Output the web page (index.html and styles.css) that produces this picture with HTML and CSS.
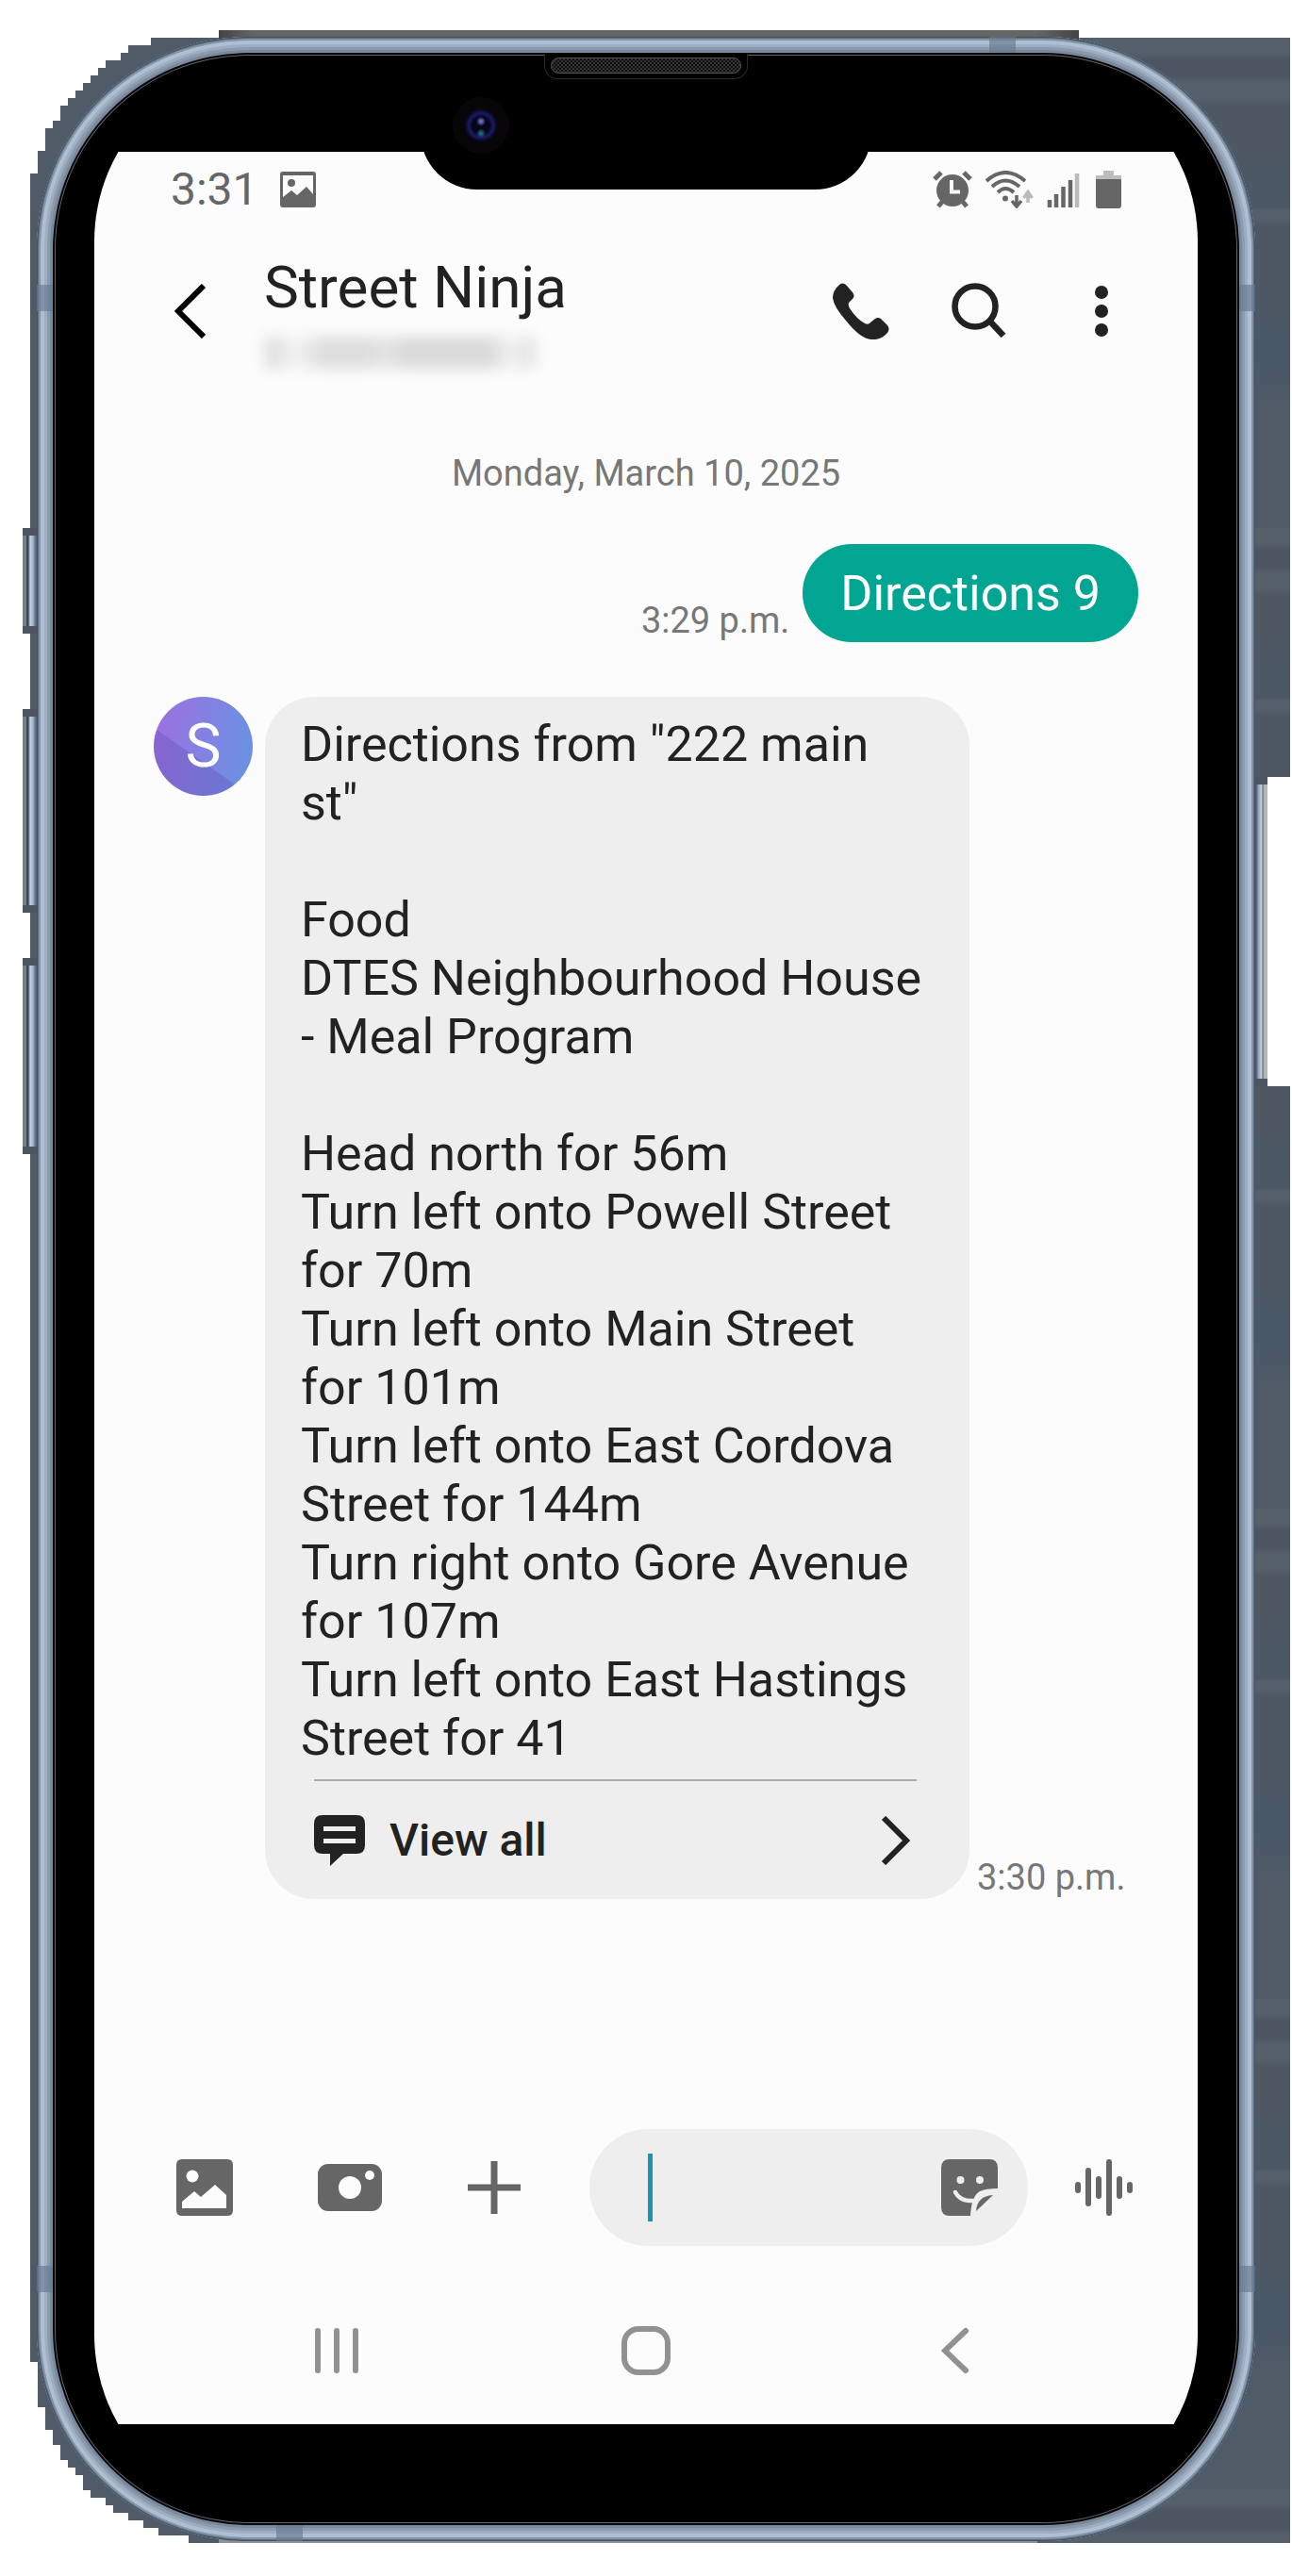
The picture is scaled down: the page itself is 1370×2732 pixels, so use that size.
FILE: index.html
```html
<!DOCTYPE html>
<html lang="en">
<head>
<meta charset="utf-8">
<meta name="viewport" content="width=device-width, initial-scale=1">
<title>Street Ninja</title>
<link rel="stylesheet" href="styles.css">
</head>
<body>
<div class="device">
  <div class="edge edge-top"></div>
  <div class="edge edge-left"></div>
  <div class="edge edge-bottom"></div>
  <div class="edge edge-right"></div>
  <svg class="steps steps-top" viewBox="0 0 200 192" aria-hidden="true"><path fill="#515b68" d="M200 0V8H152V8H128V16H104V24H96V32H80V40H72V48H64V56H56V64H48V72H40V80H32V96H24V104H16V128H8V152H0V192H100L200 100Z"/></svg>
  <svg class="steps steps-bottom" viewBox="0 0 200 192" aria-hidden="true"><path fill="#515b68" d="M0 0H8V48H16V72H24V88H32V104H40V112H48V120H56V136H64V144H80V152H88V160H104V168H120V176H136V184H168V192H200V100L100 0Z"/></svg>
  <div class="key key-mute"></div>
  <div class="key key-up"></div>
  <div class="key key-down"></div>
  <div class="key-gap"></div>
  <div class="key key-power"></div>

  <div class="phone">
    <span class="band band-left band-high"></span>
    <span class="band band-right band-high"></span>
    <span class="band band-left band-low"></span>
    <span class="band band-right band-low"></span>
    <span class="band band-top"></span>
    <span class="band band-bottom"></span>
    <div class="speaker"><div class="grille"></div></div>

    <div class="screen">
      <div class="display">
        <div class="status">
          <span class="clock">3:31</span>
          <svg width="38" height="38" viewBox="0 0 38 38" aria-hidden="true"><path fill="#666" fill-rule="evenodd" d="M3 0H35Q38 0 38 3V35Q38 38 35 38H3Q0 38 0 35V3Q0 0 3 0ZM3 4V27L12 20L18 25L28 16L35 24V4Z"/><circle cx="12" cy="12" r="4" fill="#666"/></svg>
          <span class="spacer"></span>
          <svg width="42" height="40" viewBox="0 0 42 40" aria-hidden="true"><ellipse cx="21" cy="21" rx="17" ry="17" fill="#666"/><path d="M2 9L9 2M40 9L33 2" stroke="#666" stroke-width="5"/><path d="M10 33L6 38M32 33L36 38" stroke="#666" stroke-width="5"/><path d="M20 10V22.500H29" fill="none" stroke="#fcfcfc" stroke-width="4"/></svg>
          <svg class="wifi" width="54" height="40" viewBox="0 0 54 40" aria-hidden="true"><g fill="none" stroke="#666" stroke-width="4"><path d="M2 11Q22 -7 43 11"/><path d="M8 17Q22 4 37 17"/><path d="M14 23Q22 15 31 23"/><path d="M34 26V37M29 32L34 38L39 32" stroke-width="3.500"/></g><circle cx="22" cy="29.500" r="3" fill="#666"/><path d="M46 34V23M41.500 29L46 22.500L50.500 29" fill="none" stroke="#bbb" stroke-width="3.500"/></svg>
          <svg class="signal" width="36" height="40" viewBox="0 0 36 40" aria-hidden="true"><g stroke="#666" stroke-width="4.500"><path d="M3 31V39M10 25V39M17.500 17V39M25 10V39"/></g><path d="M32 3V39" stroke="#bbb" stroke-width="4.500"/></svg>
          <svg width="27" height="40" viewBox="0 0 27 40" aria-hidden="true"><path d="M8 0H19V5H27V10H0V5H8Z" fill="#bdbdbd"/><path d="M0 9H27V37Q27 40 24 40H3Q0 40 0 37Z" fill="#666"/></svg>
        </div>

        <header class="bar">
          <button class="icon-btn" type="button" aria-label="Back"><svg width="34" height="58" viewBox="0 0 34 58"><path d="M32 2L5 29L32 56" fill="none" stroke="#000" stroke-width="6"/></svg></button>
          <div class="contact">
            <h1>Street Ninja</h1>
            <div class="hidden-number" role="img" aria-label="Phone number hidden"></div>
          </div>
          <button class="icon-btn" type="button" aria-label="Call"><svg width="60" height="60" viewBox="0 0 60 60"><path fill="#222" d="M7 2Q10 -1 14 2L21 10Q24 14 21 17L17 21Q16 23 18 27Q25 38 34 43Q38 45 40 42L45 38Q48 36 51 38L58 45Q61 49 58 53Q51 61 41 60Q29 59 14 40Q1 25 0 16Q0 8 7 2Z"/></svg></button>
          <button class="icon-btn search" type="button" aria-label="Search"><svg width="58" height="60" viewBox="0 0 58 60"><circle cx="25" cy="25" r="21.500" fill="none" stroke="#222" stroke-width="6.500"/><path d="M40 40L55 56" stroke="#222" stroke-width="6.500"/></svg></button>
          <button class="icon-btn more" type="button" aria-label="More options"><svg width="14" height="54" viewBox="0 0 14 54" fill="#222"><circle cx="7" cy="7" r="7"/><circle cx="7" cy="27" r="7"/><circle cx="7" cy="47" r="7"/></svg></button>
        </header>

        <main class="thread">
          <p class="date">Monday, March 10, 2025</p>
          <div class="row sent">
            <time>3:29 p.m.</time>
            <p class="bubble out">Directions 9</p>
          </div>
          <div class="row received">
            <div class="avatar">S</div>
            <div class="bubble in">
              <p>Directions from "222 main st"<br><br>Food<br>DTES Neighbourhood House - Meal Program<br><br>Head north for 56m<br>Turn left onto Powell Street for 70m<br>Turn left onto Main Street for 101m<br>Turn left onto East Cordova Street for 144m<br>Turn right onto Gore Avenue for 107m<br>Turn left onto East Hastings Street for 41</p>
              <button class="view-all" type="button">
                <svg width="54" height="54" viewBox="0 0 54 54" aria-hidden="true"><path fill="#222" fill-rule="evenodd" d="M9 0H45Q54 0 54 9V32Q54 41 45 41H31L17 54V41H9Q0 41 0 32V9Q0 0 9 0ZM10 12V17H44V12ZM10 25V30H44V25Z"/></svg>
                <span>View all</span>
                <svg width="32" height="52" viewBox="0 0 32 52" aria-hidden="true"><path d="M3 2L27 26L3 50" fill="none" stroke="#222" stroke-width="6"/></svg>
              </button>
            </div>
            <time>3:30 p.m.</time>
          </div>
        </main>

        <form class="composer">
          <button class="icon-btn" type="button" aria-label="Gallery"><svg width="60" height="60" viewBox="0 0 60 60"><path fill="#666" d="M6 0H54Q60 0 60 6V54Q60 60 54 60H6Q0 60 0 54V6Q0 0 6 0Z"/><circle cx="17" cy="18" r="6.500" fill="#fcfcfc"/><path fill="#fcfcfc" d="M6 45L19 34L26 40L41 27L53 38V52H6Z"/></svg></button>
          <button class="icon-btn" type="button" aria-label="Camera"><svg width="68" height="50" viewBox="0 0 68 50"><rect width="68" height="50" rx="11" fill="#666"/><circle cx="34" cy="25" r="12" fill="#fcfcfc"/><circle cx="55" cy="12" r="5" fill="#fcfcfc"/></svg></button>
          <button class="icon-btn" type="button" aria-label="Add"><svg width="58" height="56" viewBox="0 0 58 56"><path d="M29 0V56M1 28H57" stroke="#666" stroke-width="7"/></svg></button>
          <div class="field">
            <span class="caret"></span>
            <input type="text" aria-label="Message">
            <button class="icon-btn" type="button" aria-label="Stickers"><svg width="60" height="60" viewBox="0 0 60 60"><path fill="#666" d="M9 0H51Q60 0 60 9V31Q47 31 41 34Q32 39 31 60H9Q0 60 0 51V9Q0 0 9 0Z"/><path fill="#666" d="M55 38L37 55Q38 39 55 38Z"/><ellipse cx="20.500" cy="22" rx="4" ry="4" fill="#eee"/><ellipse cx="41" cy="22" rx="4" ry="4" fill="#eee"/><path d="M15 35Q20 45 34 44" fill="none" stroke="#eee" stroke-width="4.500" stroke-linecap="round"/></svg></button>
          </div>
          <button class="icon-btn" type="button" aria-label="Voice"><svg width="62" height="60" viewBox="0 0 62 60"><path d="M3 27V33M14 12V47M25 21V39M36 3V57M47 21V39M58 27V33" stroke="#666" stroke-width="6" stroke-linecap="round"/></svg></button>
        </form>

        <nav class="nav" aria-label="System">
          <button class="icon-btn" type="button" aria-label="Recents"><svg width="46" height="50" viewBox="0 0 46 50"><path d="M3 4V46M23 4V46M43 4V46" stroke="#919191" stroke-width="6" stroke-linecap="round"/></svg></button>
          <button class="icon-btn" type="button" aria-label="Home"><svg width="52" height="52" viewBox="0 0 52 52"><rect x="3" y="3" width="46" height="46" rx="15" fill="none" stroke="#919191" stroke-width="6"/></svg></button>
          <button class="icon-btn" type="button" aria-label="Back"><svg width="30" height="50" viewBox="0 0 30 50"><path d="M26 4L4 25L26 46" fill="none" stroke="#919191" stroke-width="6" stroke-linecap="round"/></svg></button>
        </nav>
      </div>
    </div>
    <div class="notch"><span class="lens"></span></div>
  </div>
</div>
</body>
</html>
```
FILE: styles.css
```css
* { box-sizing: border-box; }

body {
  margin: 0;
  padding: 32px 2px 36px 32px;
  background: #fff;
  color: #222;
  font-family: Roboto, "Liberation Sans", sans-serif;
}

h1, p { margin: 0; font-weight: 400; }
svg { display: block; flex: none; }

/* Device shell */
.device {
  position: relative;
  z-index: 0;
  padding: 7px 37px 2px 7px;
}

.edge, .steps, .key, .key-gap { position: absolute; z-index: -1; }
.edge-top { top: 0; left: 200px; right: 224px; height: 12px; background: linear-gradient(90deg, #444 0, #666 40px, #666 95%, #444); }
.edge-left { top: 192px; bottom: 192px; left: 0; width: 12px; background: #505965; }
.edge-bottom { bottom: 0; left: 200px; right: 268px; height: 8px; background: #8c9199; }
.edge-right {
  top: 8px; bottom: 0; right: 0; width: 268px;
  background: repeating-linear-gradient(180deg, #56606b 0 16px, #4c5561 24px 40px, #56606b 48px 64px, #4f5762 72px 104px, #4c5866 150px 180px, #56606d 184px 192px, #4e5864 200px 288px, #495868 320px 344px, #515b67 400px 520px);
  clip-path: polygon(44px 0, 100% 0, 100% 100%, 0 100%, 0 90%, 200px 80%, 200px 20%);
}
.steps { left: 0; width: 200px; height: 192px; }
.steps-top { top: 0; }
.steps-bottom { bottom: 0; }

.key {
  left: -8px; width: 16px;
  background: linear-gradient(90deg, #778080 0 4px, #3e4a58 4px 6px, #c3d2e4 8px, #a3b2c5 11px, #5a6675 14px);
  border: solid #4d5560;
  border-width: 8px 0;
}
.key-mute { top: 528px; height: 112px; }
.key-up { top: 720px; height: 216px; }
.key-down { top: 984px; height: 208px; }
.key-gap { top: 792px; right: 0; width: 24px; height: 328px; background: #fff; }
.key-power {
  top: 792px; left: auto; right: 24px; width: 13px; height: 328px;
  background: linear-gradient(90deg, #4a5768 0 1px, #8b9bad 3px, #c8d6e6 7px, #47566a 8px, #b5b3b4 9px);
}

.phone {
  position: relative;
  padding: 122px 61px 124px;
  background: #000;
  border-radius: 225px;
  box-shadow:
    inset 0 0 0 1px #46525f,
    inset 0 0 0 2px #5d6c80,
    inset 0 0 0 4px #8394a8,
    inset 0 0 0 8px #aebfd2,
    inset 0 0 0 11px #9eadbf,
    inset 0 0 0 14px #8b9aac,
    inset 0 0 0 17px #7a899b,
    inset 0 0 0 19px #05080d,
    inset 0 0 0 20px #66615f;
}

.band { position: absolute; width: 17px; height: 28px; background: rgba(102, 121, 145, .65); }
.band-left { left: 0; }
.band-right { right: 0; }
.band-high { top: 263px; }
.band-low { bottom: 264px; }
.band-top, .band-bottom { width: 28px; height: 17px; }
.band-top { top: 0; right: 254px; }
.band-bottom { bottom: 0; left: 254px; }

.speaker {
  position: absolute;
  top: 18px; left: 50%;
  width: 216px; height: 27px;
  margin-left: -108px;
  padding: 4px 6px;
  background: #000;
  border: 1px solid #2a2a2a;
  border-top: 0;
  border-radius: 0 0 14px 14px;
}
.grille {
  height: 17px;
  border: 1px solid #555;
  border-radius: 9px;
  background: repeating-conic-gradient(#111 0 25%, #333 0 50%) 0 0 / 4px 4px;
}

.notch {
  position: absolute;
  top: 82px; left: 50%;
  width: 478px; height: 80px;
  margin-left: -239px;
  background: #000;
  border-radius: 0 0 60px 60px;
}
.lens {
  position: absolute;
  top: -18px; left: 34px;
  width: 60px; height: 60px;
  border-radius: 50%;
  background:
    radial-gradient(circle at 50% 43%, #6a6ac8 0 1px, transparent 5px),
    radial-gradient(circle at 50% 64%, #1e6a78 0 1px, transparent 5px),
    radial-gradient(circle, #050518 0 9px, #1a1a68 13px, #0b0a26 16px, #070508 18px);
}

/* Screen */
.screen { overflow: hidden; }
.display {
  margin: -95px 0;
  padding: 107px 0 147px;
  background: #fcfcfc;
  border-radius: 190px;
}

.status {
  display: flex;
  align-items: center;
  height: 56px;
  padding: 0 81px;
}
.clock { margin-right: 23px; color: #666; font-size: 48px; line-height: 56px; }
.spacer { flex: 1; }
.wifi { margin-left: 13px; }
.signal { margin: 0 16px 0 12px; }

.icon-btn { flex: none; padding: 0; border: 0; background: none; }

.bar {
  display: flex;
  align-items: center;
  margin-top: 40px;
  padding: 0 95px 0 84px;
}
.contact { flex: 1; margin-left: 62px; }
.contact h1 { font-size: 62px; line-height: 72px; white-space: nowrap; }
.hidden-number {
  width: 288px; height: 34px;
  margin: 16px 0 0;
  background: linear-gradient(90deg, #e2e2e2 0 16px, #f0f0f0 24px 40px, #dedede 60px 110px, #e4e4e4 130px, #dadada 150px 240px, #eee 256px 270px, #e4e4e4 280px);
  filter: blur(7px);
}
.search { margin: 0 94px 0 66px; }

.date { margin-top: 88px; font-size: 38px; line-height: 46px; color: #777; text-align: center; }
.row { display: flex; padding: 0 63px; }
.row time { align-self: flex-end; font-size: 38px; line-height: 46px; color: #777; white-space: nowrap; }
.sent { justify-content: flex-end; gap: 14px; margin-top: 52px; }
.received { margin-top: 58px; gap: 8px; }
.bubble { font-size: 52px; line-height: 62px; }
.out { padding: 22px 40px 20px; border-radius: 52px; background: #02a592; color: #fff; }
.in { flex: 0 1 747px; padding: 20px 48px 0 38px; border-radius: 52px; background: #eee; }

.avatar {
  flex: none;
  width: 105px; height: 105px;
  margin-right: 5px;
  border-radius: 50%;
  background:
    linear-gradient(35deg, rgba(90, 70, 170, .3) 0 40%, transparent 41%),
    linear-gradient(100deg, #a06fe0, #6b90e2 90%);
  color: #fff;
  font-size: 64px;
  line-height: 105px;
  text-align: center;
}

.view-all {
  display: flex;
  align-items: center;
  width: calc(100% - 22px);
  height: 127px;
  margin: 12px 8px 0 14px;
  padding: 0 6px 0 0;
  border: 0;
  border-top: 2px solid #aaa;
  background: none;
  color: #222;
  font: 500 48px/56px Roboto, "Liberation Sans", sans-serif;
  text-align: left;
}
.view-all span { flex: 1; margin-left: 26px; }

.composer {
  display: flex;
  align-items: center;
  margin-top: 244px;
  padding: 0 68px 0 87px;
  gap: 90px;
}
.field {
  display: flex;
  align-items: center;
  flex: 1;
  min-width: 0;
  height: 124px;
  margin: 0 -40px 0 -18px;
  padding: 0 32px 0 62px;
  border-radius: 62px;
  background: #eee;
}
.field input { flex: 1; min-width: 0; height: 72px; padding: 0; border: 0; outline: 0; background: none; font: 52px/62px Roboto, sans-serif; }
.caret { flex: none; width: 5px; height: 72px; background: #1a94b4; }

.nav {
  display: grid;
  grid-template-columns: repeat(3, 1fr);
  place-items: center;
  margin-top: 85px;
  padding: 0 93px;
}
```
